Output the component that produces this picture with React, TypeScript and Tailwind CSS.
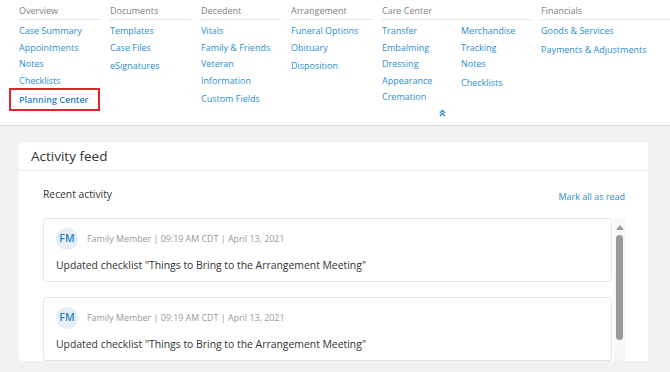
import React from 'react'

const font = { fontFamily: '"Open Sans", "Liberation Sans", sans-serif' }

interface NavColumn {
  title: string
  width: string
  groups: string[][]
}

const columns: NavColumn[] = [
  { title: 'Overview', width: 'w-[81px]', groups: [['Case Summary', 'Appointments', 'Notes', 'Checklists', 'Planning Center']] },
  { title: 'Documents', width: 'w-[81px]', groups: [['Templates', 'Case Files', 'eSignatures']] },
  { title: 'Decedent', width: 'w-[80px]', groups: [['Vitals', 'Family & Friends', 'Veteran Information', 'Custom Fields']] },
  { title: 'Arrangement', width: 'w-[81px]', groups: [['Funeral Options', 'Obituary', 'Disposition']] },
  { title: 'Care Center', width: 'w-[149px]', groups: [['Transfer', 'Embalming', 'Dressing', 'Appearance', 'Cremation'], ['Merchandise', 'Tracking', 'Notes', 'Checklists']] },
  { title: 'Financials', width: 'flex-1', groups: [['Goods & Services', 'Payments & Adjustments']] },
]

const activity = [
  { who: 'Family Member', time: '09:19 AM CDT', date: 'April 13, 2021', text: 'Updated checklist "Things to Bring to the Arrangement Meeting"' },
  { who: 'Family Member', time: '09:19 AM CDT', date: 'April 13, 2021', text: 'Updated checklist "Things to Bring to the Arrangement Meeting"' },
]

function NavLink({ label, last }: { label: string; last: boolean }) {
  if (label === 'Planning Center') {
    return (
      <div className="-ml-[10px] -mt-[1px] w-[91px] h-[23px] flex items-center whitespace-nowrap border-2 border-[#e0252b] pl-[8px] text-[#2a87c4] font-semibold">
        {label}
      </div>
    )
  }
  // last links in a group sit a touch lower in the original menu
  return (
    <div className={`text-[#2a8fd0] leading-[16.5px] pr-[4px] ${last && label !== 'Cremation' ? 'mt-[2px]' : ''}`}>
      {label}
    </div>
  )
}

export default function App() {
  return (
    <div className="w-[670px] h-[372px] overflow-hidden bg-[#f2f2f2]" style={font}>
      {/* Top nav */}
      <div className="bg-white border-b border-[#d9d9d9] h-[126px] relative">
        <div className="flex gap-[10px] pl-[19px] pt-[4px] text-[9px]">
          {columns.map((col) => (
            <div key={col.title} className={col.width}>
              <div className="text-[#7f7f7f] border-b border-[#e3e3e3] pb-[1px] leading-[14px]">{col.title}</div>
              <div className="flex gap-[10px] pt-[3px]">
                {col.groups.map((g, i) => (
                  <div key={i} className={col.groups.length > 1 ? 'w-[69px]' : 'flex-1'}>
                    {g.map((l, j) => (
                      <NavLink key={l} label={l} last={j === g.length - 1} />
                    ))}
                  </div>
                ))}
              </div>
            </div>
          ))}
        </div>
        <svg className="absolute left-[439px] top-[109px]" width="7" height="8" viewBox="0 0 7 8">
          <path d="M1 4 L3.5 1.5 L6 4 M1 7 L3.5 4.5 L6 7" stroke="#2a8fd0" strokeWidth="1.4" fill="none" />
        </svg>
      </div>

      {/* Activity feed */}
      <div className="pl-[19px] pr-[22px] pt-[16px]">
        <div className="bg-white rounded-[3px]">
          <div className="h-[29px] border-b border-[#ececec] pl-[12px] flex items-center text-[13.5px] text-[#333]">
            Activity feed
          </div>
          <div className="pl-[24px] pr-[23px]">
            <div className="flex items-center justify-between h-[47px]">
              <span className="text-[10.3px] text-[#333] mt-[1px]">Recent activity</span>
              <span className="text-[9px] text-[#2a8fd0] mt-[4px]">Mark all as read</span>
            </div>
            <div className="flex">
              <div className="flex-1 flex flex-col gap-[15px]">
                {activity.map((a, i) => (
                  <div key={i} className="border border-[#e6e6e6] rounded-[3px] h-[64px] pl-[12px] pt-[9px]">
                    <div className="flex items-center gap-[9px]">
                      <div className="w-[22px] h-[22px] rounded-full bg-[#e4eff8] text-[#2a7fbf] text-[10.5px] font-semibold flex items-center justify-center">
                        FM
                      </div>
                      <span className="text-[8.9px] text-[#999]">
                        {a.who} | {a.time} | {a.date}
                      </span>
                    </div>
                    <div className="text-[10.4px] leading-[14px] text-[#333] mt-[8px]">{a.text}</div>
                  </div>
                ))}
              </div>
              <div className="w-[11px] ml-[2px] bg-[#f7f7f7] flex flex-col items-center pt-[7px]">
                <svg width="8" height="5" viewBox="0 0 8 5">
                  <path d="M0 5 L4 0 L8 5 Z" fill="#999" />
                </svg>
                <div className="w-[7px] h-[105px] mt-[5px] rounded-full bg-[#999]" />
              </div>
            </div>
          </div>
        </div>
      </div>
    </div>
  )
}
